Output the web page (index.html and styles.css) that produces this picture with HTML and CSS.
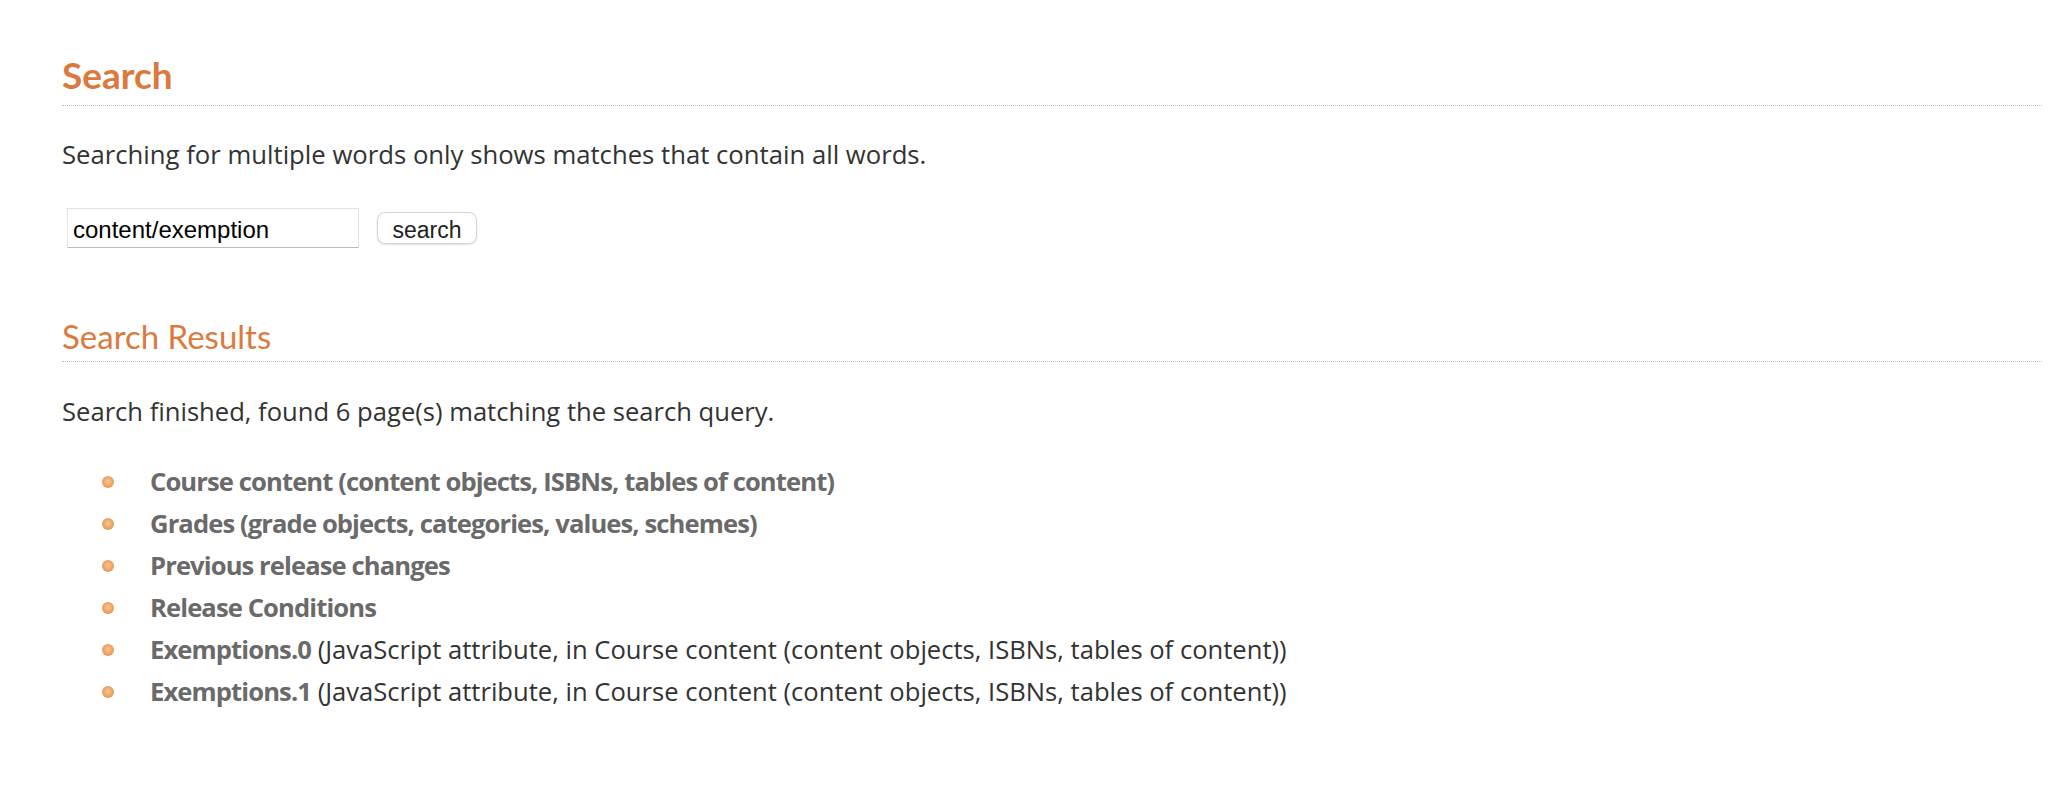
FILE: index.html
```html
<!DOCTYPE html>
<html lang="en">
<head>
<meta charset="utf-8">
<title>Search</title>
<link rel="stylesheet" href="styles.css">
</head>
<body>
<div class="page">
  <h1 class="title">Search</h1>
  <p class="intro">Searching for multiple words only shows matches that contain all words.</p>
  <form class="search-form">
    <input class="search-input" type="text" value="content/exemption">
    <button class="search-btn" type="button">search</button>
  </form>
  <h2 class="subtitle">Search Results</h2>
  <p class="status">Search finished, found 6 page(s) matching the search query.</p>
  <ul class="results">
    <li><a class="result-link" href="#">Course content (content objects, ISBNs, tables of content)</a></li>
    <li><a class="result-link" href="#">Grades (grade objects, categories, values, schemes)</a></li>
    <li><a class="result-link" href="#">Previous release changes</a></li>
    <li><a class="result-link" href="#">Release Conditions</a></li>
    <li><a class="result-link" href="#">Exemptions.0</a> (JavaScript attribute, in Course content (content objects, ISBNs, tables of content))</li>
    <li><a class="result-link" href="#">Exemptions.1</a> (JavaScript attribute, in Course content (content objects, ISBNs, tables of content))</li>
  </ul>
</div>
</body>
</html>
```

FILE: styles.css
```css
html, body {
  margin: 0;
  padding: 0;
  background: #ffffff;
}

body {
  font-family: "Open Sans", Lato, sans-serif;
  color: #333333;
}

.page {
  padding: 53px 24px 0 62px;
}

.title {
  margin: 0;
  font-family: Lato, "Open Sans", sans-serif;
  font-size: 37px;
  line-height: 44px;
  font-weight: 700;
  color: #dc7a3e;
  padding-bottom: 8px;
  border-bottom: 1px dotted #c4c4c4;
}

.intro {
  margin: 33px 0 0;
  font-size: 25.7px;
  line-height: 32px;
}

.search-form {
  margin: 37px 0 0 5px;
  display: flex;
  align-items: center;
  gap: 18px;
}

.search-input {
  box-sizing: border-box;
  width: 292px;
  height: 40px;
  margin: 0;
  padding: 4px 5px 0;
  border: 1px solid #e2e2e2;
  border-bottom-color: #bdbdbd;
  font-family: "Liberation Sans", Arial, sans-serif;
  font-size: 24px;
  color: #000;
  outline: none;
}

.search-btn {
  box-sizing: border-box;
  width: 100px;
  height: 32px;
  margin: 0;
  padding: 4px 0 0;
  border: 1px solid #d6d6d6;
  border-radius: 8px;
  background: #ffffff;
  box-shadow: 0 1px 2px rgba(0, 0, 0, 0.12);
  font-family: "Liberation Sans", Arial, sans-serif;
  font-size: 23px;
  color: #222;
}

.subtitle {
  margin: 68px 0 0;
  font-family: Lato, "Open Sans", sans-serif;
  font-size: 33px;
  line-height: 40px;
  font-weight: 400;
  color: #dc7a3e;
  padding-bottom: 5px;
  border-bottom: 1px dotted #c4c4c4;
}

.status {
  margin: 34px 0 0;
  font-size: 25.6px;
  line-height: 32px;
}

.results {
  margin: 33px 0 0;
  padding: 0 0 0 88px;
  list-style: none;
  font-size: 25.6px;
  line-height: 42px;
}

.results li {
  position: relative;
}

.results li::before {
  content: "";
  position: absolute;
  left: -48px;
  top: 15px;
  width: 12px;
  height: 12px;
  border-radius: 50%;
  background: radial-gradient(circle at 50% 45%, #f7c79a 0%, #eea867 45%, #dc8a45 100%);
}

.result-link {
  color: #6a6a6a;
  font-weight: 700;
  letter-spacing: -0.9px;
  text-decoration: none;
}
```
